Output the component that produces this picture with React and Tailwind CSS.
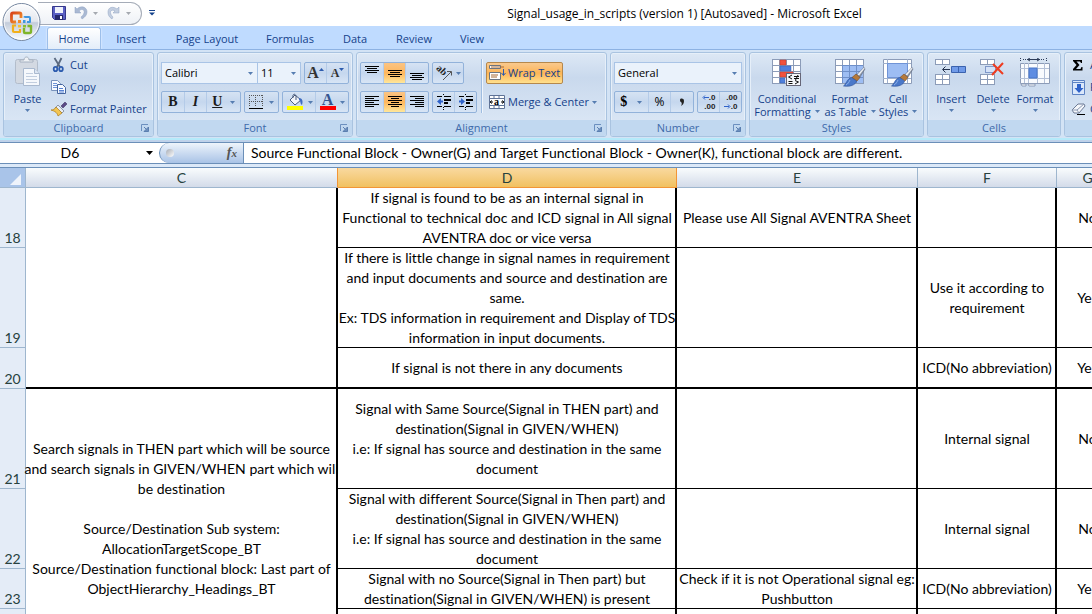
import React from "react";

const Arrow = ({ className = "text-[#567db1]" }) => (
  <svg width="5" height="3" viewBox="0 0 5 3" className={"shrink-0 " + className} aria-hidden="true">
    <path d="M0 0h5L2.5 3z" fill="currentColor" />
  </svg>
);

const Svg = ({ w = 16, h = 16, children, className = "" }) => (
  <svg width={w} height={h} viewBox={`0 0 ${w} ${h}`} className={"shrink-0 " + className} aria-hidden="true">
    {children}
  </svg>
);

const Launcher = ({ label }) => (
  <button aria-label={label} className="absolute right-1 top-1">
    <Svg w={8} h={8}>
      <path d="M0.5 7V0.5H7" stroke="#6b8fbf" fill="none" />
      <path d="M3 3l3 3" stroke="#5b7fb0" fill="none" />
      <path d="M7.500 3v4.500H3z" fill="#6d8fbd" stroke="#5b7fb0" />
    </Svg>
  </button>
);

function Group({ title, width, launcher, children }) {
  return (
    <section
      className={
        "flex h-[85px] shrink-0 flex-col overflow-hidden rounded-[3px] border border-[#a9c3e0] bg-gradient-to-b from-[#dde8f5] from-0% via-[#c9d9ed] via-30% to-[#dfeaf7] shadow-[inset_0_0_0_1px_#e6eff9] " +
        width
      }
    >
      <div className="flex min-h-0 flex-1">{children}</div>
      <div className="relative h-4 bg-[#c1d8f0] text-center leading-4 text-[#3e6aaa]">
        <span>{title}</span>
        {launcher && <Launcher label={title + " options"} />}
      </div>
    </section>
  );
}

const Cluster = ({ children, className = "" }) => (
  <div
    className={
      "flex h-[22px] shrink-0 divide-x divide-[#b4cbe8] overflow-hidden rounded-[2px] border border-[#92b2da] bg-gradient-to-b from-[#d6e3f3] via-[#c5d7ee] to-[#d8e5f5] " +
      className
    }
  >
    {children}
  </div>
);

const Tool = ({ label, on, children, className = "flex-1" }) => (
  <button
    aria-label={label}
    className={
      "flex items-center justify-center " +
      (on ? "bg-gradient-to-b from-[#fbc483] via-[#fdb65c] to-[#ffe79a] " : "") +
      className
    }
  >
    {children}
  </button>
);

function Combo({ label, value, className }) {
  return (
    <div className={"relative flex h-[22px] items-center border border-[#a9c4e6] bg-[#eaf2fb] " + className}>
      <select
        aria-label={label}
        defaultValue={value}
        className="h-full w-full appearance-none bg-transparent pl-[3px] text-black outline-none"
      >
        <option>{value}</option>
      </select>
      <Arrow className="pointer-events-none absolute right-1 text-[#567db1]" />
    </div>
  );
}

const lineSets = {
  top: [[1, 1, 15], [3, 3, 13], [1, 5, 15], [3, 7, 13]],
  middle: [[1, 5, 15], [3, 7, 13], [1, 9, 15], [3, 11, 13]],
  bottom: [[1, 8, 15], [3, 10, 13], [1, 12, 15], [3, 14, 13]],
  left: [[1, 2, 15], [1, 4, 10], [1, 6, 15], [1, 8, 10], [1, 10, 15], [1, 12, 10]],
  center: [[1, 2, 15], [4, 4, 12], [1, 6, 15], [4, 8, 12], [1, 10, 15], [4, 12, 12]],
  right: [[1, 2, 15], [6, 4, 15], [1, 6, 15], [6, 8, 15], [1, 10, 15], [6, 12, 15]],
};

const Lines = ({ kind }) => (
  <Svg>
    {lineSets[kind].map(([a, y, b]) => (
      <rect key={y} x={a} y={y} width={b - a} height="1" fill="#000" />
    ))}
  </Svg>
);

const Indent = ({ flip }) => (
  <Svg>
    <path d="M7.500 0v2M7.500 13v3" stroke="#000" strokeDasharray="1 1" />
    <path d="M1 2.500h5M8 2.500h7M1 12.500h5M8 12.500h7" stroke="#000" />
    <path d="M8 5h7v2H8zM8 8h4v2H8z" fill="#000" />
    {flip ? (
      <path d="M1 6.500h2V4l4 3.500L3 11V8.500H1z" fill="#2f62c9" />
    ) : (
      <path d="M7 6.500H5V4L1 7.500 5 11V8.500h2z" fill="#2f62c9" />
    )}
  </Svg>
);

const Grid = ({ x = 1, y = 1, cols = 5, rows = 5, cw = 5, ch = 5, stroke = "#8c9cb8" }) => (
  <g>
    {Array.from({ length: cols * rows }, (_, i) => (
      <rect
        key={i}
        x={x + (i % cols) * cw + 0.5}
        y={y + Math.floor(i / cols) * ch + 0.5}
        width={cw}
        height={ch}
        fill="#fff"
        stroke={stroke}
      />
    ))}
  </g>
);

const Brush = () => (
  <g>
    <path d="M30 9.500l-7 7 3 2.500 5-8z" fill="#8b96a6" stroke="#5f6a7c" strokeWidth=".6" />
    <path d="M30 9.500l-6.500 7 1.500 1 5.500-7z" fill="#eef1f6" />
    <path d="M22 16l4 3.500-3 3.500-5-3.500z" fill="#b5793a" stroke="#7c4c1c" strokeWidth=".6" />
    <path d="M17.500 19.500l5 3.500c-1 4-6 6-13 5 3-2 3-7 8-8.500z" fill="#4a78c9" stroke="#2c4f96" strokeWidth=".6" />
    <path d="M16 22c-1 2-2 4-4 5" stroke="#8fb1ea" fill="none" />
  </g>
);

const CondIcon = () => (
  <Svg w={32} h={32}>
    <Grid x={1} y={1} cols={4} rows={4} cw={7} ch={6} />
    <path d="M9 2h6v5H9zM9 14h13v5H9z" fill="#f0523d" stroke="#c93a28" strokeWidth=".5" />
    <path d="M9 8h11v5H9zM9 20h5v5H9z" fill="#4f80dc" stroke="#3560b5" strokeWidth=".5" />
    <rect x="15.500" y="15.500" width="14" height="12" fill="#f4f6fa" stroke="#667" />
    <path d="M21 17l-3.500 2 3.500 2M17.500 23.500h4M17.500 25.500h4M23 18.500h5M23 20.500h5M27 17l-2.500 5M24 22.500l3.500 1.500-3.500 2" stroke="#111" fill="none" />
  </Svg>
);

const TableIcon = () => (
  <Svg w={32} h={32}>
    <Grid x={1} y={1} cols={4} rows={4} cw={7} ch={6} />
    <path d="M9 8h20v17H9z" fill="#9dbdf3" />
    <path d="M8.500 7v18M15.500 7v18M22.500 7v18M8 7.500h21M8 13.500h21M8 19.500h21" stroke="#6e8fc9" fill="none" />
    <path d="M1.500 1.500h28v24h-28z" fill="none" stroke="#8c9cb8" />
    <Brush />
  </Svg>
);

const CellStyleIcon = () => (
  <Svg w={32} h={32}>
    <path d="M1.500 1.500h28v24h-28z" fill="#fff" stroke="#8c9cb8" />
    <path d="M5.500 1v24M25.500 1v24M1 5.500h28M1 20.500h28" stroke="#9fb0cc" />
    <path d="M5.500 5.500h20v14h-20z" fill="#9dbdf3" stroke="#6f93d6" />
    <Brush />
  </Svg>
);

const InsertIcon = () => (
  <Svg w={32} h={32}>
    <Grid x={0} y={1} cols={2} rows={1} cw={7} ch={5} />
    <Grid x={0} y={16} cols={2} rows={2} cw={7} ch={5} />
    <path d="M16.500 8.500h14v6h-14z" fill="#6f9ae8" stroke="#3a62ae" />
    <path d="M23.500 8v6" stroke="#3a62ae" />
    <path d="M8 11.500h7M10.500 8.500l-3 3 3 3" stroke="#23314d" fill="none" />
  </Svg>
);

const DeleteIcon = () => (
  <Svg w={32} h={32}>
    <Grid x={3} y={1} cols={2} rows={1} cw={7} ch={5} />
    <Grid x={3} y={16} cols={2} rows={2} cw={7} ch={5} />
    <path d="M8.500 8.500h10v6h-10z" fill="#d5e2f7" stroke="#2b4f9c" strokeDasharray="1 1" />
    <path d="M16 6l10 10M26 5L15 17" stroke="#ee3c20" strokeWidth="2" />
  </Svg>
);

const FormatIcon = () => (
  <Svg w={32} h={32}>
    <path d="M1.500 0v3M27.500 0v3M4 1.500h4M20 1.500h5" stroke="#2d3c58" strokeDasharray="1 1" />
    <path d="M8 1.500h13M11 0L8.500 1.500 11 3M18 0l2.500 1.500L18 3" stroke="#2d3c58" fill="none" />
    <path d="M1.500 5.500h29v20h-29z" fill="#f9fbfe" stroke="#8c9cb8" />
    <path d="M5.500 5v20M9.500 5v20M18.500 5v20M25.500 5v20M1 10.500h29M1 20.500h29" stroke="#b3c0d7" />
    <path d="M10 10h8v10h-8z" fill="#5f8de2" stroke="#4774c8" />
    <path d="M2 26h5v2H3zM9 26h7v2h-6z" stroke="#8c9cb8" fill="#fff" />
  </Svg>
);

const PasteIcon = () => (
  <Svg w={28} h={32}>
    <rect x="1.500" y="3.500" width="22" height="24" rx="2" fill="#d3d9e2" stroke="#b3bdcb" />
    <path d="M6 6V4h4c0-4 5-4 5 0h4v2z" fill="#eef1f5" stroke="#a5b0bf" />
    <path d="M9.500 12.500h11l5 5v12h-16z" fill="#f5f8fc" stroke="#a9b9cf" />
    <path d="M20.500 12.500v5h5" fill="#dde6f2" stroke="#a9b9cf" />
    <path d="M12 17.500h7M12 20.500h11M12 23.500h11M12 26.500h11" stroke="#c2cedf" />
  </Svg>
);

const CutIcon = () => (
  <Svg>
    <path d="M3.500 1l5.500 9M10.500 1L6 10" stroke="#5b6a80" strokeWidth="1.800" />
    <ellipse cx="4.500" cy="12" rx="1.800" ry="2.200" fill="none" stroke="#2d5cae" strokeWidth="1.800" />
    <ellipse cx="10" cy="12" rx="1.800" ry="2.200" fill="none" stroke="#2d5cae" strokeWidth="1.800" />
  </Svg>
);

const CopyIcon = () => (
  <Svg>
    <path d="M.5 1.500h6l3 3v7h-9z" fill="#f7faff" stroke="#7892bd" />
    <path d="M2 4.500h4M2 6.500h5M2 8.500h5" stroke="#6f94d8" />
    <path d="M6.500 5.500h5l3 3v6h-8z" fill="#f7faff" stroke="#44659f" />
    <path d="M8 9.500h4M8 11.500h5M8 13h5" stroke="#5682d3" />
  </Svg>
);

const PainterIcon = () => (
  <Svg>
    <path d="M10 5l4-4 2 2-4 4z" fill="#5b4a86" stroke="#463a66" strokeWidth=".6" />
    <path d="M7 4l6 6-2 2-7-5z" fill="#e7ecf4" stroke="#6b7588" strokeWidth=".7" />
    <path d="M5 6l6 6-4 3C6 11 3 10 0 9c2 0 4-1 5-3z" fill="#f3c552" stroke="#a97a1c" strokeWidth=".7" />
  </Svg>
);

const Orb = () => (
  <svg width="42" height="42" viewBox="0 0 42 42" aria-hidden="true">
    <defs>
      <linearGradient id="orb" x1="0" y1="0" x2="0" y2="1">
        <stop offset="0" stopColor="#fdfdfe" />
        <stop offset=".48" stopColor="#e3e7ee" />
        <stop offset=".52" stopColor="#c3ccda" />
        <stop offset="1" stopColor="#fbfdff" />
      </linearGradient>
      <linearGradient id="orange" x1="0" y1="0" x2="1" y2="1">
        <stop offset="0" stopColor="#d8431a" />
        <stop offset="1" stopColor="#f59a2c" />
      </linearGradient>
    </defs>
    <circle cx="21.500" cy="21" r="18.500" fill="url(#orb)" stroke="#74859e" />
    <circle cx="21.500" cy="21" r="17.300" fill="none" stroke="#fff" strokeOpacity=".8" />
    <g fill="none" strokeLinejoin="round">
      <path d="M16 21h-3q-1.500 0-1.500-1.500v-6Q11.500 12 13 12h6.500q1.500 0 1.500 1.500V17" stroke="url(#orange)" strokeWidth="2.800" />
      <path d="M24.500 16.500V16h4.500q1 0 1 1v4h-3" stroke="#3f97e0" strokeWidth="2" />
      <path d="M16 24.500h-3v5.500q0 1 1 1h6v-3" stroke="#f2b01a" strokeWidth="2.200" />
      <path d="M24 27v4q0 1 1 1h4.500q1.500 0 1.500-1.500V25h-3.500" stroke="#7fb52b" strokeWidth="2.400" />
    </g>
    <path d="M18 19h3v3h-3z" fill="#f08a2a" />
    <path d="M23 19h2.500v3H23z" fill="#3f97e0" />
    <path d="M18 24h3v2.500h-3z" fill="#f6c233" />
    <path d="M23 24h3v2.500h-3z" fill="#8abf35" />
  </svg>
);

const BigButton = ({ icon, lines, arrowBelow, className }) => (
  <button className={"flex flex-col items-center pt-[5px] text-[#15428b] " + className}>
    {icon}
    <span className="mt-0.5 block whitespace-nowrap leading-[13px]">
      {lines.map((l, i) => (
        <span key={l} className="flex items-center justify-center gap-1">
          {l}
          {!arrowBelow && i === lines.length - 1 && <Arrow />}
        </span>
      ))}
    </span>
    {arrowBelow && <Arrow className="mt-1 text-[#567db1]" />}
  </button>
);

const tabs = [
  ["Insert", "w-[60px]"],
  ["Page Layout", "w-[92px]"],
  ["Formulas", "w-[74px]"],
  ["Data", "w-[56px]"],
  ["Review", "w-[62px]"],
  ["View", "w-[54px]"],
];

function TitleBar() {
  return (
    <header className="flex h-[26px] shrink-0 items-center bg-white">
      <div className="ml-[38px] flex h-[23px] w-[104px] shrink-0 items-center rounded-r-full border border-l-0 border-[#a5acb8] bg-gradient-to-b from-white to-[#eef1f6] pl-[13px]">
        <button aria-label="Save">
          <Svg>
            <path d="M1.500 1.500h13v13h-11l-2-2z" fill="#5a5fc4" stroke="#36388c" />
            <path d="M4 2h8v6H4z" fill="#eef1fb" />
            <path d="M4 10h8v5H4z" fill="#26286b" />
            <path d="M9 11h2v3H9z" fill="#fff" />
          </Svg>
        </button>
        <button aria-label="Undo" className="ml-1.5">
          <Svg>
            <path d="M2 2v6h6L6 6c3-3 6-1 5 2-.5 2-2 3-3 4l1 2c3-2 5-4 5-7 0-5-6-7-10-3z" fill="#aab9d3" stroke="#8fa2c2" strokeWidth=".5" />
          </Svg>
        </button>
        <Arrow className="ml-1 text-[#a5a9b0]" />
        <button aria-label="Redo" className="ml-2">
          <Svg>
            <path d="M13 2v6H7l2-2c-3-2-5 0-4.500 2 .5 2 1.500 3 2.500 4l-1 2C3 12 2 10 2 7c0-5 5-6 9-3z" fill="#c3cee0" stroke="#8fa2c2" strokeWidth=".5" />
          </Svg>
        </button>
        <Arrow className="ml-1 text-[#a5a9b0]" />
      </div>
      <button aria-label="Customize quick access toolbar" className="ml-[7px]">
        <Svg w={6} h={6}>
          <path d="M0 .5h6" stroke="#15428b" />
          <path d="M0 2.500h6l-3 3z" fill="#15428b" />
        </Svg>
      </button>
      <h1 className="flex-1 whitespace-nowrap pl-[122px] pt-0.5 text-center text-xs font-normal text-black">
        Signal_usage_in_scripts (version 1) [Autosaved] - Microsoft Excel
      </h1>
    </header>
  );
}

function Ribbon() {
  return (
    <div className="flex h-[91px] shrink-0 gap-[3px] overflow-hidden border-t border-b-2 border-b-[#b5eafa] border-t-[#8db2e3] bg-[#d3e3f5] pl-[3px] pt-0.5">
      <Group title="Clipboard" width="w-[151px]" launcher>
        <button className="flex w-[47px] flex-col items-center pt-[3px] text-[#15428b]">
          <PasteIcon />
          <span className="mt-1 leading-[13px]">Paste</span>
          <Arrow className="mt-1 text-[#567db1]" />
        </button>
        <div className="flex flex-col pt-px text-[#15428b]">
          {[[<CutIcon />, "Cut"], [<CopyIcon />, "Copy"], [<PainterIcon />, "Format Painter"]].map(([icon, t]) => (
            <button key={t} className="flex h-[22px] items-center gap-[3px] whitespace-nowrap">
              {icon}
              {t}
            </button>
          ))}
        </div>
      </Group>

      <Group title="Font" width="w-[196px]" launcher>
        <div className="flex flex-col gap-[7px] pl-[3px] pt-[9px]">
          <div className="flex">
            <Combo label="Font name" value="Calibri" className="w-[97px]" />
            <Combo label="Font size" value="11" className="mr-[3px] w-[43px] border-l-0" />
            <Cluster className="w-[45px]">
              <Tool label="Grow font">
                <span className="font-['Liberation_Serif',serif] text-base font-bold leading-none text-[#333]">A</span>
                <svg width="5" height="3" viewBox="0 0 5 3" className="mb-2"><path d="M0 3h5L2.500 0z" fill="#2d5cae" /></svg>
              </Tool>
              <Tool label="Shrink font">
                <span className="font-['Liberation_Serif',serif] text-xs font-bold leading-none text-[#333]">A</span>
                <Arrow className="mb-2 text-[#2d5cae]" />
              </Tool>
            </Cluster>
          </div>
          <div className="flex gap-[3px] font-['Liberation_Serif',serif] text-sm font-bold leading-none text-[#1b1b1b]">
            <Cluster className="w-[80px]">
              <Tool label="Bold">B</Tool>
              <Tool label="Italic"><i>I</i></Tool>
              <Tool label="Underline" className="flex-[1.500] gap-2"><u>U</u><Arrow /></Tool>
            </Cluster>
            <Cluster className="w-[35px]">
              <Tool label="Borders" className="flex-1 gap-1.5">
                <Svg w={14}>
                  <path d="M.5 1v12M6.500 1v12M13.500 1v12M0 1.500h14M0 7.500h14" stroke="#555" strokeDasharray="1 1" />
                  <path d="M0 14.500h14" stroke="#000" />
                </Svg>
                <Arrow />
              </Tool>
            </Cluster>
            <Cluster className="w-[67px]">
              <Tool label="Fill color" className="flex-1 gap-1">
                <Svg w={18} h={18}>
                  <path d="M4 7l5-5 6 5-6 5z" fill="#f2f5fa" stroke="#4b5c7c" />
                  <path d="M7 5c-1-4 2-5 3-2v4" stroke="#4b5c7c" fill="none" />
                  <path d="M13 5c4 0 4 4 3 7-2-1-1-4-3-5z" fill="#3f6cc0" />
                  <path d="M1 13h16v4H1z" fill="#ff0" />
                </Svg>
                <Arrow />
              </Tool>
              <Tool label="Font color" className="flex-1 gap-1">
                <span className="flex w-4 flex-col items-center border-b-4 border-[#f00] text-base leading-3 text-[#35548f]">A</span>
                <Arrow />
              </Tool>
            </Cluster>
          </div>
        </div>
      </Group>

      <Group title="Alignment" width="w-[251px]" launcher>
        <div className="flex flex-col gap-[7px] pl-[3px] pt-[9px]">
          <div className="flex gap-[3px]">
            <Cluster className="w-[69px]">
              <Tool label="Top align"><Lines kind="top" /></Tool>
              <Tool label="Middle align" on><Lines kind="middle" /></Tool>
              <Tool label="Bottom align"><Lines kind="bottom" /></Tool>
            </Cluster>
            <Cluster className="w-[32px]">
              <Tool label="Orientation" className="flex-1 gap-0.5">
                <Svg w={18}>
                  <text x="5" y="8" transform="rotate(45 5 6)" fontSize="10" fontWeight="700" fontFamily="Liberation Serif" fill="#222" textAnchor="middle">
                    ab
                  </text>
                  <path d="M7 15l8-8M11 6.500h4.500v4" stroke="#555" fill="none" />
                </Svg>
                <Arrow />
              </Tool>
            </Cluster>
          </div>
          <div className="flex gap-[3px]">
            <Cluster className="w-[69px]">
              <Tool label="Align left"><Lines kind="left" /></Tool>
              <Tool label="Center" on><Lines kind="center" /></Tool>
              <Tool label="Align right"><Lines kind="right" /></Tool>
            </Cluster>
            <Cluster className="w-[45px]">
              <Tool label="Decrease indent"><Indent /></Tool>
              <Tool label="Increase indent"><Indent flip /></Tool>
            </Cluster>
          </div>
        </div>
        <div className="ml-1 mr-[3px] mt-1.5 h-[54px] w-0.5 border-l border-[#9fbde0] bg-[#eff5fc]" />
        <div className="flex flex-col items-start gap-[7px] whitespace-nowrap pt-[9px] text-[#15428b]">
          <button className="flex h-[22px] items-center gap-0.5 rounded-[2px] border border-[#b5884c] bg-gradient-to-b from-[#f9c98d] via-[#fdb556] to-[#ffe08d] px-0.5">
            <Svg w={17}>
              <path d="M.5 .5h11v3H.5z" fill="#fff" stroke="#6b7480" />
              <path d="M.5 7.500h11v7H.5z" fill="#fff" stroke="#6b7480" />
              <path d="M2 2h13M2 10h7M2 12h6" stroke="#a86b35" />
              <path d="M14.500 4v6M12.500 8l2 2.500 2-2.500" stroke="#2d5cae" fill="none" />
            </Svg>
            Wrap Text
          </button>
          <button className="flex h-[22px] items-center gap-[3px] px-[3px]">
            <Svg>
              <path d="M.5 1.500h15v13H.5z" fill="#fff" stroke="#5f7397" />
              <path d="M5 1v3M10 1v3M5 12v3M10 12v3M0 4.500h16M0 11.500h16" stroke="#5f7397" />
              <path d="M1 8h3M12 8h3M3 6.500L1 8l2 1.500M13 6.500L15 8l-2 1.500" stroke="#111" fill="none" />
              <text x="5" y="11" fontSize="10" fontWeight="700" fontFamily="Liberation Serif">a</text>
            </Svg>
            Merge &amp; Center
            <Arrow />
          </button>
        </div>
      </Group>

      <Group title="Number" width="w-[136px]" launcher>
        <div className="flex flex-col gap-[7px] pl-[3px] pt-[9px]">
          <Combo label="Number format" value="General" className="w-[128px]" />
          <div className="flex gap-[3px]">
            <Cluster className="w-[80px]">
              <Tool label="Accounting format" className="flex-[1.500] gap-2.5">
                <span className="font-['Liberation_Serif',serif] text-sm font-bold leading-none">$</span>
                <Arrow />
              </Tool>
              <Tool label="Percent"><span className="text-xs leading-none">%</span></Tool>
              <Tool label="Comma style">
                <Svg w={6} h={8}><path d="M1 2c0-2 4-2 4 1 0 2-1 4-3 5 1-2 1-3 0-4-.6 0-1-1-1-2z" fill="#222" /></Svg>
              </Tool>
            </Cluster>
            <Cluster className="w-[45px] font-['Liberation_Sans',sans-serif] text-[8px] font-bold leading-[9px] text-[#222]">
              <Tool label="Increase decimal">
                <span className="flex flex-col items-end">
                  <span className="flex items-center"><Svg w={7} h={5}><path d="M7 2.500H2M3 .5l-2 2 2 2" stroke="#2f62c9" fill="none" /></Svg>.0</span>
                  <span>.00</span>
                </span>
              </Tool>
              <Tool label="Decrease decimal">
                <span className="flex flex-col items-end">
                  <span>.00</span>
                  <span className="flex items-center"><Svg w={7} h={5}><path d="M0 2.500h5M4 .5l2 2-2 2" stroke="#2f62c9" fill="none" /></Svg>.0</span>
                </span>
              </Tool>
            </Cluster>
          </div>
        </div>
      </Group>

      <Group title="Styles" width="w-[175px]">
        <BigButton className="w-[74px]" icon={<CondIcon />} lines={["Conditional", "Formatting"]} />
        <BigButton className="w-[52px]" icon={<TableIcon />} lines={["Format", "as Table"]} />
        <BigButton className="w-[44px]" icon={<CellStyleIcon />} lines={["Cell", "Styles"]} />
      </Group>

      <Group title="Cells" width="w-[134px]">
        <BigButton className="ml-0.5 w-[42px]" icon={<InsertIcon />} lines={["Insert"]} arrowBelow />
        <BigButton className="w-[42px]" icon={<DeleteIcon />} lines={["Delete"]} arrowBelow />
        <BigButton className="w-[42px]" icon={<FormatIcon />} lines={["Format"]} arrowBelow />
      </Group>

      <Group title="" width="w-[120px]">
        <div className="flex flex-col whitespace-nowrap pl-1.5 pt-px text-[#15428b]">
          <button className="flex h-[22px] items-center gap-[3px]">
            <Svg><path d="M2 3h9v3h-1l-1-1.500H5.500L8.500 8l-3.500 4h4.500l1-2h1v3.500H2V12l3.500-4L2 4z" fill="#000" /></Svg>
            AutoSum
          </button>
          <button className="flex h-[22px] items-center gap-[3px]">
            <Svg>
              <path d="M1.500 1.500h12v14h-12z" fill="#dbe8fb" stroke="#5d83c4" />
              <path d="M2 3.500h11" stroke="#5d83c4" />
              <path d="M6 5h4v4h2.500L8 14 3.500 9H6z" fill="#2f62c9" />
            </Svg>
            Fill
          </button>
          <button className="flex h-[22px] items-center gap-[3px]">
            <Svg>
              <path d="M1 9l6-6h6l1 2-6 7H3z" fill="#f5f7fb" stroke="#6d7b95" />
              <path d="M1 9h5l2 3M6 9l7-6" stroke="#8c9ab3" fill="none" />
              <path d="M6 13.500h8" stroke="#000" />
            </Svg>
            Clear
          </button>
        </div>
      </Group>
    </div>
  );
}

function FormulaBar() {
  return (
    <div className="mt-0.5 flex h-[22px] shrink-0 border-y border-[#6b8fb8] bg-white font-['Lato',sans-serif] text-sm text-black [font-variant-ligatures:none]">
      <label className="flex w-[159px] shrink-0 items-center">
        <input aria-label="Name box" defaultValue="D6" className="min-w-0 flex-1 bg-transparent pr-1.5 text-center outline-none" />
        <Svg w={7} h={4} className="mr-1.5"><path d="M0 0h7L3.500 4z" fill="#000" /></Svg>
      </label>
      <div className="flex w-[85px] shrink-0 items-center justify-between rounded-l-full border-x border-[#6b8fb8] bg-gradient-to-b from-[#eef4fb] to-[#a9c3e6] pl-1.5 pr-1.5">
        <span className="size-2 rounded-full bg-gradient-to-br from-[#a7acb5] to-white" />
        <button aria-label="Insert function" className="font-['Liberation_Serif',serif] text-sm font-bold italic leading-none text-[#555]">
          f<span className="text-[11px]">x</span>
        </button>
      </div>
      <input
        aria-label="Formula"
        className="min-w-0 flex-1 bg-transparent pl-[7px] outline-none"
        defaultValue="Source Functional Block - Owner(G) and Target Functional Block - Owner(K), functional block are different."
      />
    </div>
  );
}

const rows = [
  {
    n: 18, h: "h-[60px]", c: { span: 3, text: "" },
    d: "If signal is found to be as an internal signal in\nFunctional to technical doc and ICD signal in All signal\nAVENTRA doc or vice versa",
    e: "Please use All Signal AVENTRA Sheet", f: "", g: "No",
  },
  {
    n: 19, h: "h-[100px]",
    d: "If there is little change in signal names in requirement\nand input documents and source and destination are\nsame.\nEx: TDS information in requirement and Display of TDS\ninformation in input documents.",
    e: "", f: "Use it according to\nrequirement", g: "Yes",
  },
  { n: 20, h: "h-[41px]", thick: true, d: "If signal is not there in any documents", e: "", f: "ICD(No abbreviation)", g: "Yes" },
  {
    n: 21, h: "h-[100px]",
    c: {
      span: 4,
      text: "Search signals in THEN part which will be source\nand search signals in GIVEN/WHEN part which will\nbe destination\n\nSource/Destination Sub system:\nAllocationTargetScope_BT\nSource/Destination functional block: Last part of\nObjectHierarchy_Headings_BT",
    },
    d: "Signal with Same Source(Signal in THEN part) and\ndestination(Signal in GIVEN/WHEN)\ni.e: If signal has source and destination in the same\ndocument",
    e: "", f: "Internal signal", g: "No",
  },
  {
    n: 22, h: "h-[80px]",
    d: "Signal with different Source(Signal in Then part) and\ndestination(Signal in GIVEN/WHEN)\ni.e: If signal has source and destination in the same\ndocument",
    e: "", f: "Internal signal", g: "No",
  },
  {
    n: 23, h: "h-[40px]",
    d: "Signal with no Source(Signal in Then part) but\ndestination(Signal in GIVEN/WHEN) is present",
    e: "Check if it is not Operational signal eg:\nPushbutton", f: "ICD(No abbreviation)", g: "Yes",
  },
  { n: 24, h: "h-[40px]", d: "", e: "", f: "", g: "" },
];

const Cell = ({ text, thick, span }) => (
  <td
    rowSpan={span}
    className={"border-r-2 border-black p-0 pl-px text-center align-middle " + (thick ? "border-b-2" : "border-b")}
  >
    <div className="-mb-px flex justify-center whitespace-pre">{text}</div>
  </td>
);

function Sheet() {
  return (
    <div className="min-h-0 flex-1 overflow-hidden bg-white">
      <table className="w-[1119px] table-fixed border-separate border-spacing-0 font-['Lato',sans-serif] text-sm leading-5 text-black [font-variant-ligatures:none]">
        <colgroup>
          <col className="w-[26px]" />
          <col className="w-[312px]" />
          <col className="w-[339px]" />
          <col className="w-[241px]" />
          <col className="w-[139px]" />
          <col className="w-[62px]" />
        </colgroup>
        <thead>
          <tr className="h-5">
            <th className="border-b border-r border-[#9eb6ce] bg-[#a9c4e9] p-0">
              <Svg w={11} h={11} className="ml-auto mr-1 mt-1"><path d="M11 0v11H0z" fill="#eef3fb" /></Svg>
            </th>
            {["C", "D", "E", "F", "G"].map((c) => (
              <th
                key={c}
                className={
                  "border-b border-r p-0 font-normal leading-[19px] text-[#27413e] " +
                  (c === "D"
                    ? "border-[#f29536] bg-gradient-to-b from-[#f9d99f] to-[#f1c15f]"
                    : c === "C"
                      ? "border-b-[#9eb6ce] border-r-[#f29536] bg-gradient-to-b from-[#f9fcfd] to-[#d3dbe9]"
                      : "border-[#9eb6ce] bg-gradient-to-b from-[#f9fcfd] to-[#d3dbe9]")
                }
              >
                {c}
              </th>
            ))}
          </tr>
        </thead>
        <tbody>
          {rows.map((r) => (
            <tr key={r.n} className={r.h}>
              <th className="border-b border-r border-[#9eb6ce] bg-[#e4ecf7] p-0 align-bottom font-normal leading-[18px] text-[#27413e]">{r.n}</th>
              {r.c && <Cell text={r.c.text} span={r.c.span} thick />}
              <Cell text={r.d} thick={r.thick} />
              <Cell text={r.e} thick={r.thick} />
              <Cell text={r.f} thick={r.thick} />
              <Cell text={r.g} thick={r.thick} />
            </tr>
          ))}
        </tbody>
      </table>
    </div>
  );
}

export default function App() {
  return (
    <div className="relative flex h-screen flex-col overflow-hidden bg-[#bfd2ea] font-['Open_Sans',sans-serif] text-[11px]">
      <TitleBar />
      <nav className="flex h-[23px] shrink-0 items-end bg-[#bfdbff] pl-[47px] text-[#15428b]">
        <button className="h-[22px] w-[54px] rounded-t-[3px] border border-b-0 border-[#9dbfea] bg-gradient-to-b from-white to-[#e3edf9] pt-0.5 shadow-[0_0_2px_#fff]">
          Home
        </button>
        {tabs.map(([t, w]) => (
          <button key={t} className={"h-[22px] whitespace-nowrap pt-0.5 " + w}>{t}</button>
        ))}
      </nav>
      <button aria-label="Office menu" className="absolute left-0 top-px"><Orb /></button>
      <Ribbon />
      <FormulaBar />
      <div className="h-1 shrink-0 border-b border-[#6b8fb8] bg-[#dce9f8]" />
      <Sheet />
    </div>
  );
}
